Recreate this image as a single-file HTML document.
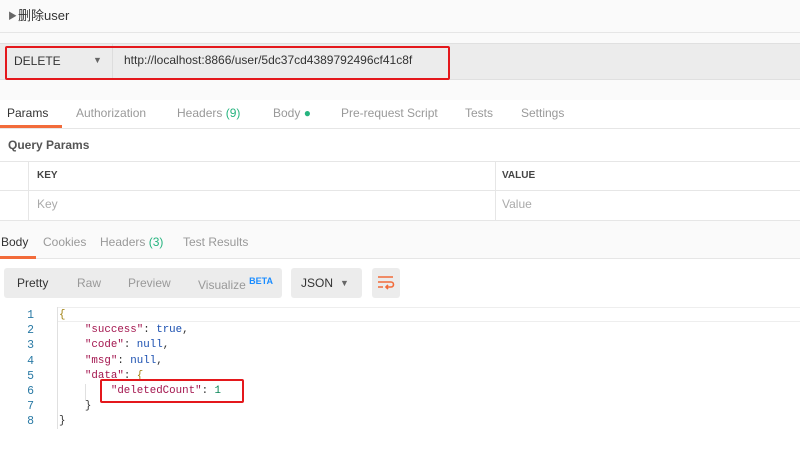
<!DOCTYPE html>
<html><head><meta charset="utf-8"><style>
*{margin:0;padding:0;box-sizing:border-box}
body{width:800px;height:463px;background:#fff;font-family:"Liberation Sans","Noto Sans CJK SC",sans-serif;font-size:12px;color:#505050;position:relative;overflow:hidden}
.a{position:absolute;white-space:nowrap}
.mono{font-family:"Liberation Mono",monospace;font-size:10.8px}
.g{color:#999}
</style></head><body>
<div class="a" style="left:0;top:0;width:800px;height:100px;background:#fafafa"></div>
<div class="a" style="left:0;top:32px;width:800px;height:1px;background:#e6e6e6"></div>
<div class="a" style="left:8px;top:9px;font-size:9px;color:#666">▶</div>
<div class="a" style="left:18px;top:5px;font-size:13px;color:#333">删除user</div>
<div class="a" style="left:0;top:43px;width:800px;height:37px;background:#ececec;border-top:1px solid #e0e0e0;border-bottom:1px solid #e0e0e0"></div>
<div class="a" style="left:112px;top:44px;width:1px;height:35px;background:#ddd"></div>
<div class="a" style="left:5px;top:46px;width:445px;height:34px;border:2px solid #e4181c;border-radius:2px"></div>
<div class="a" style="left:14px;top:54px;font-size:12px;color:#333">DELETE</div>
<div class="a" style="left:93px;top:55px;font-size:9px;color:#666">▼</div>
<div class="a" style="left:124px;top:53px;font-size:12px;color:#333">http://localhost:8866/user/5dc37cd4389792496cf41c8f</div>
<div class="a" style="left:0;top:128px;width:800px;height:1px;background:#e6e6e6"></div>
<div class="a" style="left:7px;top:106px;font-size:12px;color:#333">Params</div>
<div class="a" style="left:0;top:125px;width:62px;height:3px;background:#f26b3a"></div>
<div class="a g" style="left:76px;top:106px;font-size:12px">Authorization</div>
<div class="a g" style="left:177px;top:106px;font-size:12px">Headers <span style="color:#26b47f">(9)</span></div>
<div class="a g" style="left:273px;top:106px;font-size:12px">Body <span style="color:#26b47f">●</span></div>
<div class="a g" style="left:341px;top:106px;font-size:12px">Pre-request Script</div>
<div class="a g" style="left:465px;top:106px;font-size:12px">Tests</div>
<div class="a g" style="left:521px;top:106px;font-size:12px">Settings</div>
<div class="a" style="left:8px;top:138px;font-size:12px;color:#555;font-weight:bold">Query Params</div>
<div class="a" style="left:0;top:161px;width:800px;height:1px;background:#e6e6e6"></div>
<div class="a" style="left:0;top:190px;width:800px;height:1px;background:#e6e6e6"></div>
<div class="a" style="left:0;top:220px;width:800px;height:1px;background:#e6e6e6"></div>
<div class="a" style="left:28px;top:162px;width:1px;height:58px;background:#e6e6e6"></div>
<div class="a" style="left:495px;top:162px;width:1px;height:58px;background:#e6e6e6"></div>
<div class="a" style="left:37px;top:170px;font-size:10px;font-weight:bold;color:#444">KEY</div>
<div class="a" style="left:502px;top:170px;font-size:10px;font-weight:bold;color:#444">VALUE</div>
<div class="a" style="left:37px;top:197px;font-size:12px;color:#aaa">Key</div>
<div class="a" style="left:502px;top:197px;font-size:12px;color:#aaa">Value</div>
<div class="a" style="left:0;top:221px;width:800px;height:38px;background:#fafafa;border-bottom:1px solid #e6e6e6"></div>
<div class="a" style="left:1px;top:235px;font-size:12px;color:#333">Body</div>
<div class="a" style="left:0;top:256px;width:36px;height:3px;background:#f26b3a"></div>
<div class="a g" style="left:43px;top:235px;font-size:12px">Cookies</div>
<div class="a g" style="left:100px;top:235px;font-size:12px">Headers <span style="color:#26b47f">(3)</span></div>
<div class="a g" style="left:183px;top:235px;font-size:12px">Test Results</div>
<div class="a" style="left:4px;top:268px;width:278px;height:30px;background:#ececec;border-radius:3px"></div>
<div class="a" style="left:17px;top:276px;font-size:12px;color:#333">Pretty</div>
<div class="a g" style="left:77px;top:276px;font-size:12px">Raw</div>
<div class="a g" style="left:128px;top:276px;font-size:12px">Preview</div>
<div class="a g" style="left:198px;top:276px;font-size:12px">Visualize <sup style="color:#1a8cff;font-size:9px;font-weight:bold">BETA</sup></div>
<div class="a" style="left:291px;top:268px;width:71px;height:30px;background:#ececec;border-radius:3px"></div>
<div class="a" style="left:301px;top:276px;font-size:12px;color:#333">JSON</div>
<div class="a" style="left:340px;top:278px;font-size:9px;color:#666">▼</div>
<div class="a" style="left:372px;top:268px;width:28px;height:30px;background:#ececec;border-radius:3px"></div>
<svg class="a" style="left:377px;top:275px" width="18" height="16" viewBox="0 0 18 16"><path d="M1 2h15M1 7h13a2.5 2.5 0 0 1 0 5H9M11 10l-2 2 2 2M1 12h5" fill="none" stroke="#f26b3a" stroke-width="1.6"/></svg>
<div class="a" style="left:57px;top:307px;width:743px;height:1px;background:#eee"></div>
<div class="a" style="left:57px;top:321px;width:743px;height:1px;background:#eee"></div>
<div class="a" style="left:57px;top:307px;width:1px;height:122px;background:#e0e0e0"></div>
<div class="a" style="left:85px;top:384px;width:1px;height:16px;background:#e0e0e0"></div>
<div class="a mono" style="left:26px;top:308px;line-height:15.2px;color:#2a7aa5;text-align:right;width:8px;font-size:11.5px">1<br>2<br>3<br>4<br>5<br>6<br>7<br>8</div>
<div class="a mono" style="left:59px;top:308px;line-height:15.2px;color:#333;white-space:pre"><span style="color:#a08010">{</span>
    <span style="color:#a3154e">"success"</span>: <span style="color:#1a4fb0">true</span>,
    <span style="color:#a3154e">"code"</span>: <span style="color:#1a4fb0">null</span>,
    <span style="color:#a3154e">"msg"</span>: <span style="color:#1a4fb0">null</span>,
    <span style="color:#a3154e">"data"</span>: <span style="color:#a08010">{</span>
        <span style="color:#a3154e">"deletedCount"</span>: <span style="color:#098658">1</span>
    }
}</div>
<div class="a" style="left:100px;top:379px;width:144px;height:24px;border:2px solid #e4181c;border-radius:2px"></div>
</body></html>
